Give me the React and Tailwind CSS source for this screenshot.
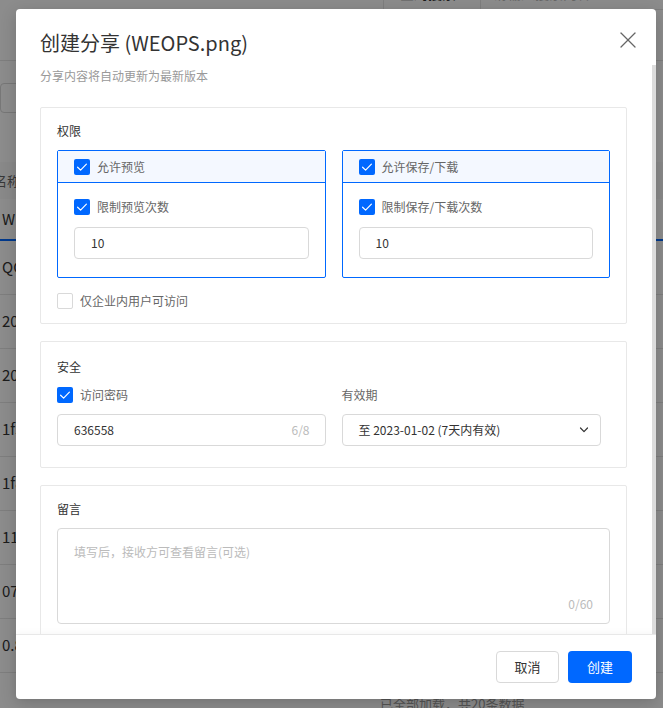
import React from 'react';
import { X } from 'lucide-react';

const rows = ['QCloud_2022.xlsx', '20221201_report.docx', '20221128_backup.zip', '1f3a9c_notes.txt', '1f8b2d_image.jpg', '11月汇总.pdf', '07_plan.pptx', '0.8.3_release.tar.gz'];

const Check = ({ checked }) =>
  checked ? (
    <span className="flex h-4 w-4 shrink-0 items-center justify-center rounded-[2px] bg-[#0068ff]">
      <svg viewBox="0 0 16 16" className="h-4 w-4" fill="none" stroke="#fff" strokeWidth="1.2" strokeLinecap="round" strokeLinejoin="round">
        <polyline points="3.6,8.2 6.6,11.1 12.4,5.2" />
      </svg>
    </span>
  ) : (
    <span className="h-4 w-4 shrink-0 rounded-[2px] border border-[#d9d9d9] bg-white" />
  );

const CheckRow = ({ checked, children }) => (
  <label className="flex h-4 items-center gap-[7px] text-[12px] leading-4 text-[#666]">
    <Check checked={checked} />
    <span>{children}</span>
  </label>
);

const Section = ({ title, className, children }) => (
  <div className={`rounded-[2px] border border-[#e8e8e8] px-4 ${className}`}>
    <div className="text-[12px] leading-[18px] text-[#333]">{title}</div>
    {children}
  </div>
);

const PermBox = ({ allow, limit }) => (
  <div className="rounded-[2px] border border-[#0068ff]">
    <div className="flex h-8 items-center border-b border-[#0068ff] bg-[#f4f8ff] px-4">
      <CheckRow checked>{allow}</CheckRow>
    </div>
    <div className="px-4 pt-4 pb-[18px]">
      <CheckRow checked>{limit}</CheckRow>
      <div className="mt-3 flex h-8 items-center rounded-[4px] border border-[#d9d9d9] px-4 text-[12px] text-[#333]">10</div>
    </div>
  </div>
);

// dimmed page behind the dialog
const Backdrop = () => (
  <div className="h-[708px] w-[663px] overflow-hidden bg-white text-[#333]">
    <div className="mt-[-22px] flex h-[32px] pl-[383px]">
      <div className="flex w-[98px] items-center gap-1 whitespace-nowrap border-x border-b border-[#e5e5e5] pl-4 text-[14px] font-medium">
        全局搜索 <span className="text-[10px] text-[#999]">⌄</span>
      </div>
      <div className="flex flex-1 items-center whitespace-nowrap border-b border-[#e5e5e5] px-3 text-[14px] text-[#bbb]">请输入搜索内容</div>
    </div>
    <div className="mt-[50px] h-[1px] bg-[#e5e5e5]" />
    <div className="mt-[22px] h-[30px] w-[200px] rounded-[4px] border border-[#d9d9d9]" />
    <div className="mt-[49px] flex h-[37px] items-center bg-[#fafafa] text-[13px] text-[#666]">
      <span className="ml-[-6px]">名称</span>
    </div>
    <div className="flex h-[42px] items-center border-b-2 border-[#0068ff] pl-[2px] text-[15px]">WEOPS.png</div>
    {rows.map((r) => (
      <div key={r} className="flex h-[54px] items-center border-b border-[#e5e5e5] pl-[2px] text-[15px]">
        {r}
      </div>
    ))}
    <div className="pl-[380px] pt-[21px] text-[13px] text-[#999]">已全部加载，共20条数据</div>
  </div>
);

export default function App() {
  return (
    <div className="relative h-[708px] w-[663px] overflow-hidden font-['Noto_Sans_CJK_SC',sans-serif]">
      <Backdrop />
      <div className="absolute inset-0 bg-black/45" />

      <div className="absolute left-4 top-[9px] flex h-[690px] w-[640px] flex-col rounded-[4px] bg-white shadow-[0_4px_16px_rgba(0,0,0,0.18)]">
        <div className="relative h-[56px] px-6 pt-5">
          <h2 className="text-[20px] leading-[28px] text-[#333]">创建分享 (WEOPS.png)</h2>
          <button className="absolute right-[14px] top-[17px] text-[#666]">
            <X size={28} strokeWidth={1.1} />
          </button>
        </div>

        <div className="relative flex-1 overflow-hidden">
          <div className="pl-6 pr-[29px] pt-[2px]">
            <p className="text-[12px] leading-[18px] text-[#999]">分享内容将自动更新为最新版本</p>

            <Section title="权限" className="mt-[22px] pt-[14px] pb-[14px]">
              <div className="mt-[10px] grid grid-cols-2 gap-4">
                <PermBox allow="允许预览" limit="限制预览次数" />
                <PermBox allow="允许保存/下载" limit="限制保存/下载次数" />
              </div>
              <div className="mt-[15px]">
                <CheckRow>仅企业内用户可访问</CheckRow>
              </div>
            </Section>

            <Section title="安全" className="mt-[17px] pt-4 pb-[21px]">
              <div className="mt-[11px] grid grid-cols-2 gap-4">
                <div>
                  <CheckRow checked>访问密码</CheckRow>
                  <div className="mt-[11px] flex h-8 items-center justify-between rounded-[4px] border border-[#d9d9d9] pl-4 pr-[15px] text-[12px]">
                    <span className="text-[#333]">636558</span>
                    <span className="text-[#bbb]">6/8</span>
                  </div>
                </div>
                <div>
                  <div className="text-[12px] leading-4 text-[#666]">有效期</div>
                  <div className="mt-[11px] flex h-8 w-[259px] items-center justify-between rounded-[4px] border border-[#d9d9d9] pl-4 pr-[11px] text-[12px] text-[#333]">
                    <span>至 2023-01-02 (7天内有效)</span>
                    <svg viewBox="0 0 10 6" className="h-[6px] w-[10px]" fill="none" stroke="#333" strokeWidth="1.2" strokeLinecap="round" strokeLinejoin="round">
                      <polyline points="1.5,1 5,4.6 8.5,1" />
                    </svg>
                  </div>
                </div>
              </div>
            </Section>

            <Section title="留言" className="mt-[17px] pt-[14px] pb-4">
              <div className="mt-[10px] flex h-[96px] flex-col justify-between rounded-[4px] border border-[#d9d9d9] px-4 pt-[14px] pb-[10px] text-[12px] leading-[18px]">
                <span className="text-[#bbb]">填写后，接收方可查看留言(可选)</span>
                <span className="self-end text-[#bbb]">0/60</span>
              </div>
            </Section>
          </div>
          <div className="absolute bottom-0 right-0 top-0 w-1 bg-[#dcdcdc]" />
        </div>

        <div className="flex h-[65px] items-center justify-end gap-[9px] border-t border-[#e8e8e8] px-6 shadow-[0_-2px_6px_rgba(0,0,0,0.03)]">
          <button className="h-8 w-[63px] rounded-[4px] border border-[#d9d9d9] bg-white text-[13px] text-[#333]">取消</button>
          <button className="h-8 w-[64px] rounded-[4px] bg-[#0068ff] text-[13px] text-white">创建</button>
        </div>
      </div>
    </div>
  );
}
